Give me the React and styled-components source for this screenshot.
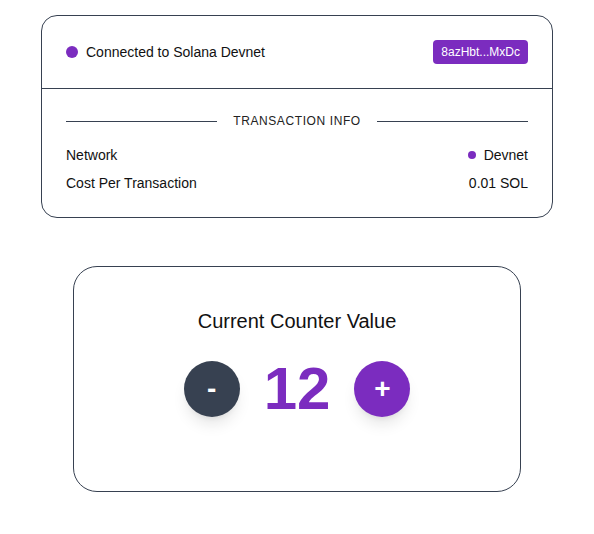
import React, { useState } from "react";
import styled, { createGlobalStyle } from "styled-components";

const purple = "#7b2cbf";
const slate = "#374151";

const GlobalStyle = createGlobalStyle`
  body {
    margin: 0;
    background: #ffffff;
    font-family: "Liberation Sans", Arial, sans-serif;
    color: #111111;
  }
`;

const Page = styled.div`
  display: flex;
  flex-direction: column;
  align-items: center;
  gap: 48px;
  padding-top: 15px;
`;

const InfoCard = styled.div`
  width: 512px;
  box-sizing: border-box;
  border: 1px solid ${slate};
  border-radius: 16px;
  background: #fff;
`;

const Header = styled.div`
  display: flex;
  align-items: center;
  justify-content: space-between;
  padding: 24px;
  border-bottom: 1px solid ${slate};
`;

const Status = styled.div`
  display: flex;
  align-items: center;
  gap: 8px;
  font-size: 14px;
  line-height: 20px;
`;

const Dot = styled.span`
  width: ${(p) => p.size}px;
  height: ${(p) => p.size}px;
  border-radius: 50%;
  background: ${purple};
  flex-shrink: 0;
`;

const Badge = styled.span`
  background: ${purple};
  color: #fff;
  font-size: 12px;
  line-height: 24px;
  padding: 0 8px;
  border-radius: 4px;
`;

const Body = styled.div`
  padding: 24px;
  display: flex;
  flex-direction: column;
`;

const Divider = styled.div`
  display: flex;
  align-items: center;
  gap: 16px;
  font-size: 12px;
  line-height: 16px;
  letter-spacing: 0.6px;
  color: #222;
  margin-bottom: 16px;

  &::before,
  &::after {
    content: "";
    flex: 1;
    height: 1px;
    background: ${slate};
  }
`;

const Rows = styled.div`
  display: flex;
  flex-direction: column;
  gap: 8px;
`;

const Row = styled.div`
  display: flex;
  justify-content: space-between;
  align-items: center;
  font-size: 14px;
  line-height: 20px;
`;

const Value = styled.span`
  display: flex;
  align-items: center;
  gap: 8px;
`;

const CounterCard = styled.div`
  width: 448px;
  box-sizing: border-box;
  border: 1px solid ${slate};
  border-radius: 24px;
  padding: 40px 24px 74px;
  display: flex;
  flex-direction: column;
  align-items: center;
  gap: 26px;
`;

const Title = styled.h2`
  margin: 0;
  font-size: 20px;
  line-height: 28px;
  font-weight: 400;
`;

const Controls = styled.div`
  display: flex;
  align-items: center;
  gap: 24px;
`;

const RoundButton = styled.button`
  width: 56px;
  height: 56px;
  border-radius: 50%;
  border: none;
  background: ${(p) => (p.variant === "plus" ? purple : slate)};
  color: #fff;
  font-family: "Liberation Sans", Arial, sans-serif;
  font-size: 28px;
  font-weight: 700;
  display: flex;
  align-items: center;
  justify-content: center;
  padding: 0;
  cursor: pointer;
  box-shadow: 0 10px 15px -3px rgba(0, 0, 0, 0.1),
    0 4px 6px -4px rgba(0, 0, 0, 0.1);
`;

const Count = styled.span`
  font-size: 60px;
  line-height: 56px;
  font-weight: 700;
  color: ${purple};
  min-width: 66px;
  text-align: center;
`;

export default function App() {
  const [count, setCount] = useState(12);

  return (
    <>
      <GlobalStyle />
      <Page>
        <InfoCard>
          <Header>
            <Status>
              <Dot size={12} />
              Connected to Solana Devnet
            </Status>
            <Badge>8azHbt...MxDc</Badge>
          </Header>
          <Body>
            <Divider>TRANSACTION INFO</Divider>
            <Rows>
              <Row>
                <span>Network</span>
                <Value>
                  <Dot size={8} />
                  Devnet
                </Value>
              </Row>
              <Row>
                <span>Cost Per Transaction</span>
                <Value>0.01 SOL</Value>
              </Row>
            </Rows>
          </Body>
        </InfoCard>

        <CounterCard>
          <Title>Current Counter Value</Title>
          <Controls>
            <RoundButton onClick={() => setCount((c) => c - 1)}>-</RoundButton>
            <Count>{count}</Count>
            <RoundButton variant="plus" onClick={() => setCount((c) => c + 1)}>
              +
            </RoundButton>
          </Controls>
        </CounterCard>
      </Page>
    </>
  );
}
